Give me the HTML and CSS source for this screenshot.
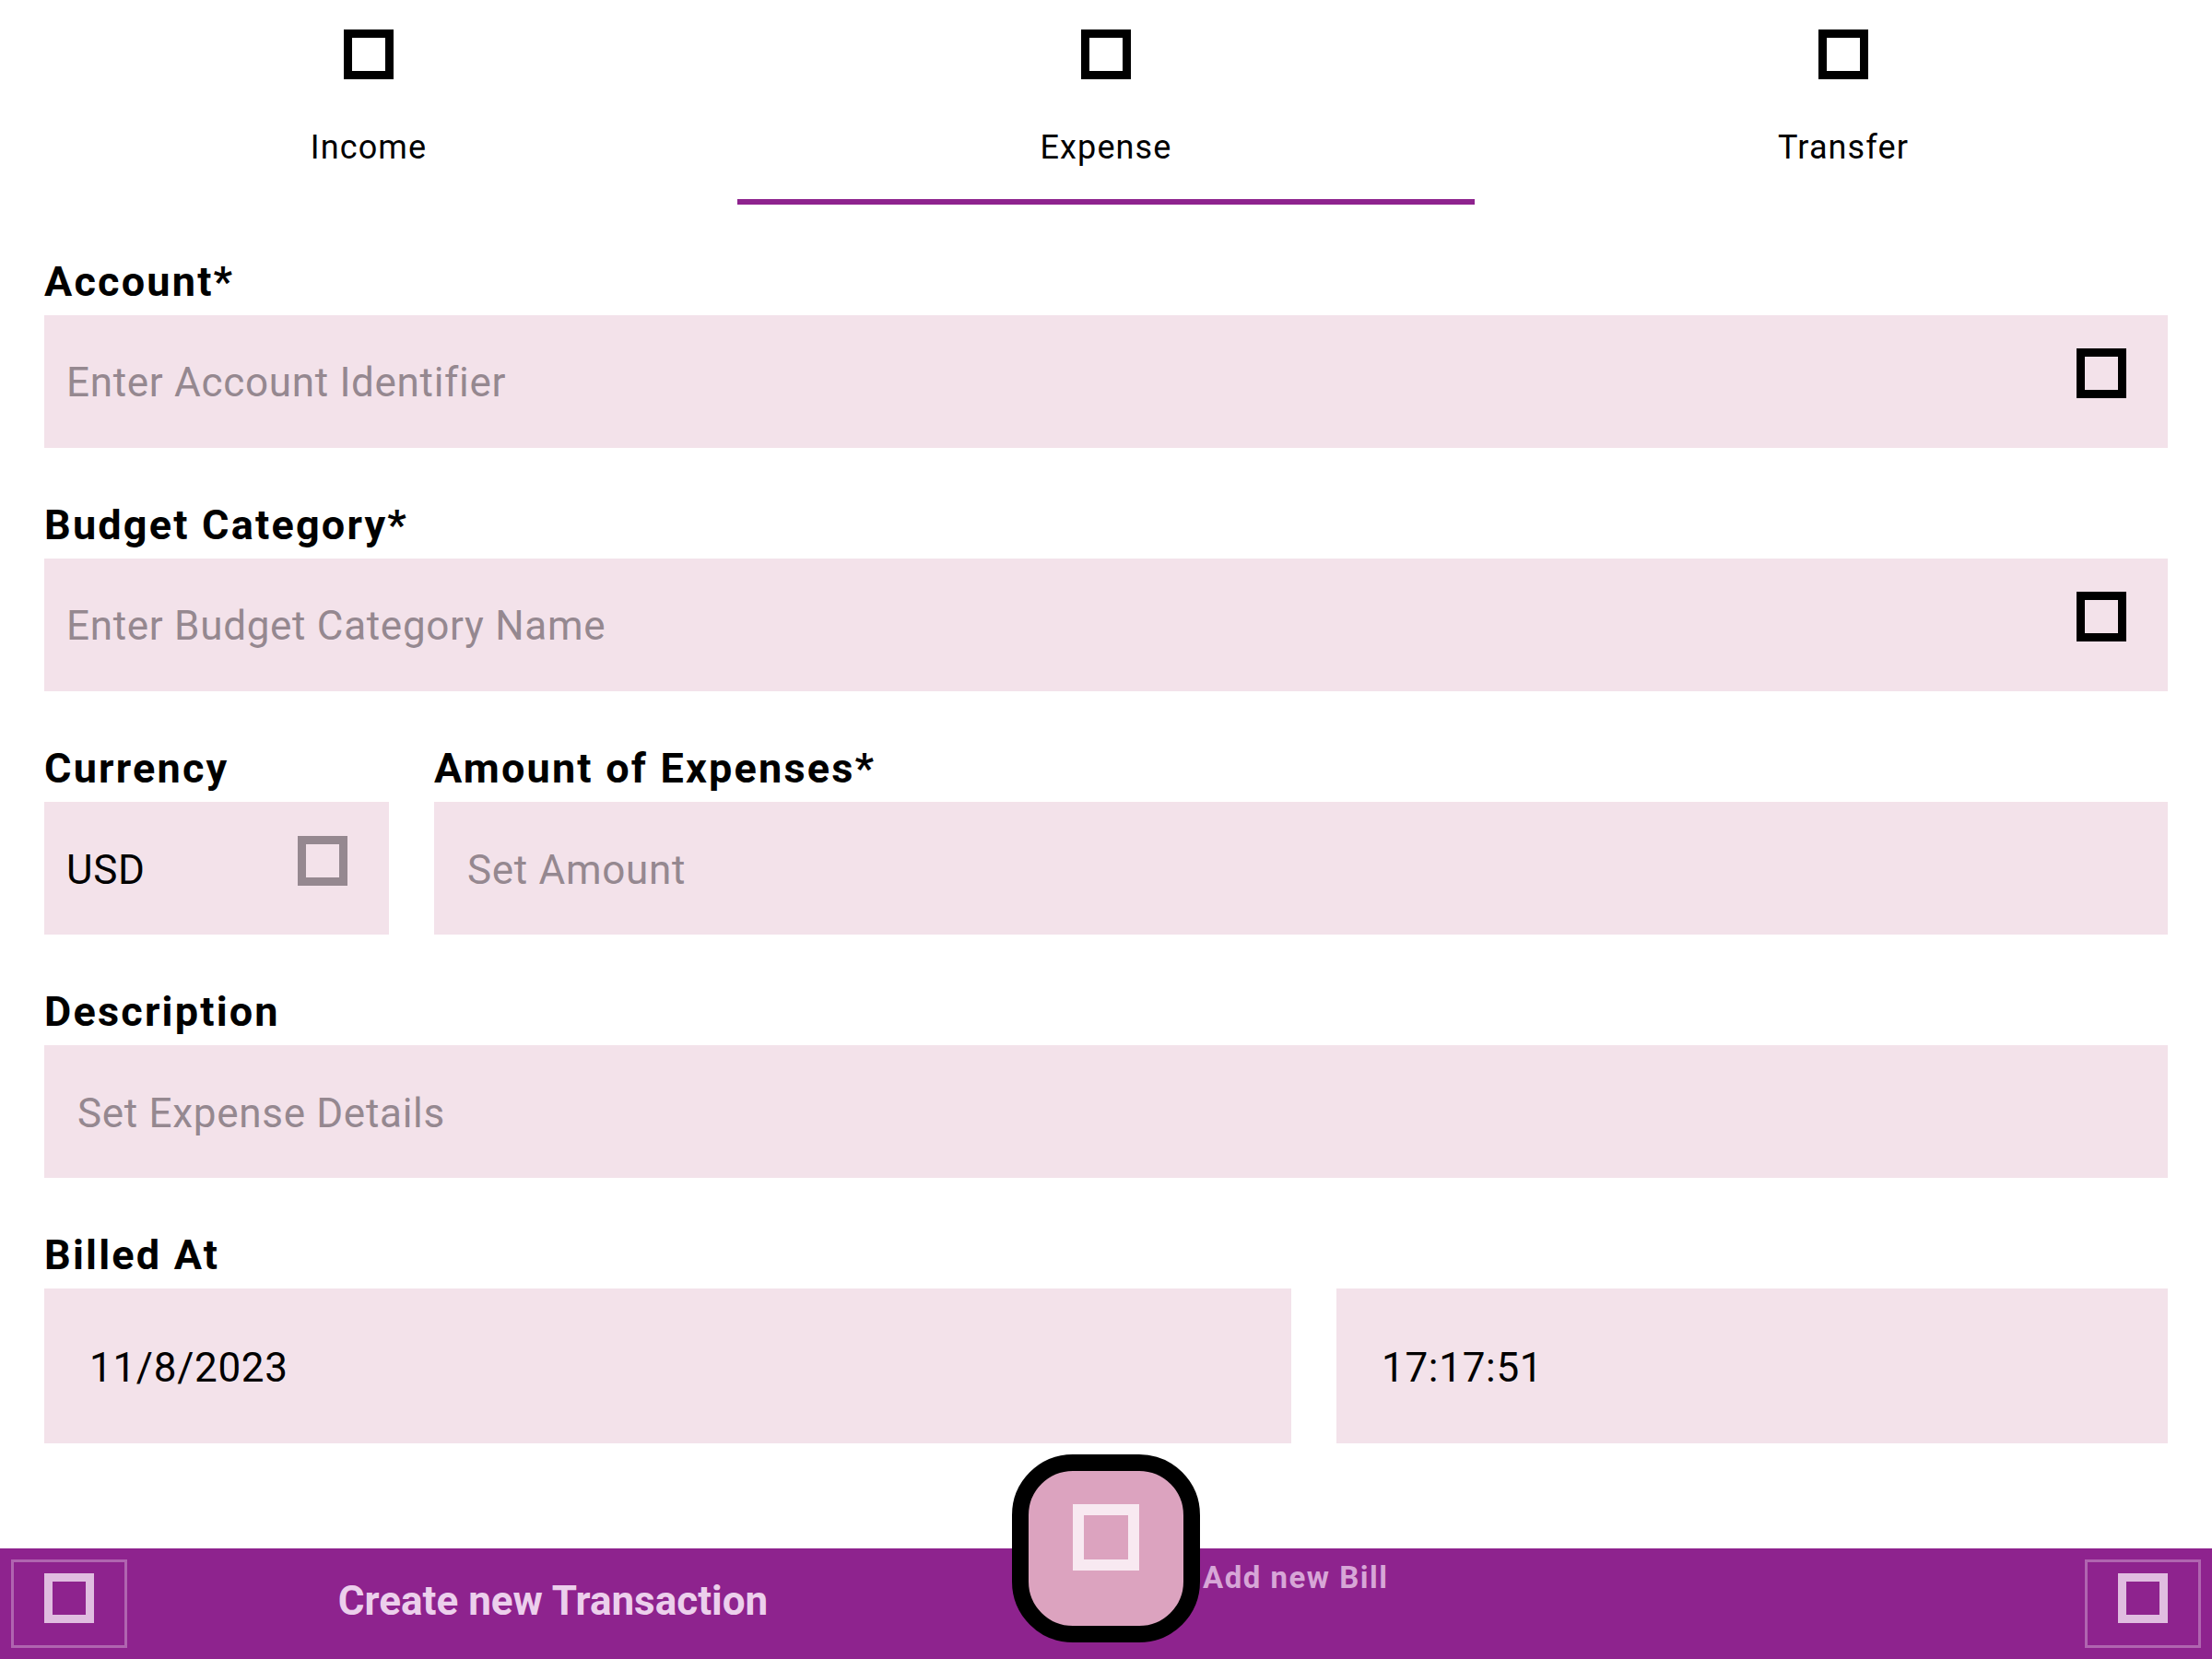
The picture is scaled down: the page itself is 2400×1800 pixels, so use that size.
FILE: index.html
```html
<!DOCTYPE html>
<html lang="en">
<head>
<meta charset="utf-8">
<title>Create new Transaction</title>
<link rel="stylesheet" href="styles.css">
</head>
<body>
<div class="app">
  <nav class="tabs">
    <div class="tab"><span class="tab-icon"></span><span class="tab-label">Income</span></div>
    <div class="tab active"><span class="tab-icon"></span><span class="tab-label">Expense</span></div>
    <div class="tab"><span class="tab-icon"></span><span class="tab-label">Transfer</span></div>
  </nav>

  <main class="form">
    <div class="field">
      <div class="label">Account*</div>
      <div class="box box-suffix">
        <span class="placeholder pad-a">Enter Account Identifier</span>
        <span class="box-icon"></span>
      </div>
    </div>

    <div class="field">
      <div class="label">Budget Category*</div>
      <div class="box box-suffix">
        <span class="placeholder pad-a">Enter Budget Category Name</span>
        <span class="box-icon"></span>
      </div>
    </div>

    <div class="row-currency">
      <div class="field">
        <div class="label">Currency</div>
        <div class="box box-suffix">
          <span class="value pad-a low">USD</span>
          <span class="box-icon grey"></span>
        </div>
      </div>
      <div class="field">
        <div class="label">Amount of Expenses*</div>
        <div class="box">
          <span class="placeholder pad-b low">Set Amount</span>
        </div>
      </div>
    </div>

    <div class="field">
      <div class="label">Description</div>
      <div class="box">
        <span class="placeholder pad-b low">Set Expense Details</span>
      </div>
    </div>

    <div class="field">
      <div class="label">Billed At</div>
      <div class="row-datetime">
        <div class="box box-tall"><span class="value pad-c low">11/8/2023</span></div>
        <div class="box box-tall"><span class="value pad-c low">17:17:51</span></div>
      </div>
    </div>
  </main>

  <footer class="bar">
    <div class="bar-left">
      <div class="nav-btn nav-btn-left"><span class="nav-icon"></span></div>
      <div class="bar-title">Create new Transaction</div>
      <div></div>
    </div>
    <div class="bar-right">
      <div class="bill-label">Add new Bill</div>
      <div class="nav-btn"><span class="nav-icon"></span></div>
    </div>
    <div class="fab"><span class="fab-icon"></span></div>
  </footer>
</div>
</body>
</html>
```

FILE: styles.css
```css
html, body {
  margin: 0;
  padding: 0;
  background: #ffffff;
}

body {
  font-family: Roboto, "Noto Sans", "Liberation Sans", sans-serif;
  color: #000;
}

.app {
  width: 2400px;
  height: 1800px;
  display: flex;
  flex-direction: column;
  overflow: hidden;
}

/* Tabs */
.tabs {
  display: grid;
  grid-template-columns: 1fr 1fr 1fr;
  height: 222px;
}

.tab {
  display: flex;
  flex-direction: column;
  align-items: center;
  box-sizing: border-box;
  height: 222px;
  padding-top: 32px;
  border-bottom: 6px solid transparent;
}

.tab.active {
  border-bottom-color: #8e238e;
}

.tab-icon {
  width: 54px;
  height: 54px;
  box-sizing: border-box;
  border: 9px solid #000;
}

.tab-label {
  margin-top: 56px;
  font-size: 36px;
  line-height: 37px;
  letter-spacing: 1.1px;
  color: #000;
}

/* Form */
.form {
  flex: 1;
  padding: 0 48px;
}

.field {
  display: flex;
  flex-direction: column;
}

.label {
  margin-top: 61px;
  margin-bottom: 14px;
  height: 45px;
  font-size: 45px;
  line-height: 45px;
  font-weight: 700;
  letter-spacing: 2.2px;
  white-space: nowrap;
}

.box {
  height: 144px;
  background: #f3e2ea;
  display: flex;
  align-items: center;
  justify-content: space-between;
  box-sizing: border-box;
  font-size: 44px;
  letter-spacing: 0.7px;
}

.box-suffix {
  padding-right: 45px;
}

.box-tall {
  height: 168px;
}

.placeholder {
  color: #958890;
}

.value {
  color: #000;
}

.pad-a { padding-left: 24px; padding-top: 2px; }
.pad-b { padding-left: 36px; }
.pad-c { padding-left: 49px; }
.low { padding-top: 4px; padding-bottom: 0; }

.box-icon {
  width: 54px;
  height: 54px;
  box-sizing: border-box;
  border: 9px solid #000;
  flex: none;
  margin-bottom: 18px;
}

.box-icon.grey {
  border-color: #958890;
  margin-bottom: 16px;
}

.row-currency {
  display: grid;
  grid-template-columns: 374px 1fr;
  column-gap: 49px;
}

.row-datetime {
  display: grid;
  grid-template-columns: 3fr 2fr;
  column-gap: 49px;
}

/* Bottom bar */
.bar {
  position: relative;
  height: 120px;
  flex: none;
  background: #8e238e;
  display: grid;
  grid-template-columns: 1fr 1fr;
}

.bar-left {
  display: grid;
  grid-template-columns: 138px 1fr 138px;
  align-items: center;
}

.nav-btn {
  width: 126px;
  height: 96px;
  box-sizing: border-box;
  border: 3px solid rgba(255, 255, 255, 0.3);
  display: flex;
  align-items: center;
  justify-content: center;
  padding-bottom: 12px;
  margin-right: 12px;
}

.nav-btn-left {
  margin-left: 12px;
  margin-right: 0;
}

.nav-icon {
  width: 54px;
  height: 54px;
  box-sizing: border-box;
  border: 9px solid #e0bde0;
}

.bar-title {
  text-align: center;
  font-size: 44px;
  line-height: 44px;
  font-weight: 700;
  letter-spacing: 0;
  color: #eccfec;
  white-space: nowrap;
  margin-bottom: 6px;
}

.bar-right {
  display: flex;
  align-items: center;
  justify-content: space-between;
  padding-left: 105px;
}

.bill-label {
  align-self: flex-start;
  margin-top: 15px;
  font-size: 33px;
  line-height: 33px;
  font-weight: 700;
  letter-spacing: 1.5px;
  color: #d7a6d7;
  white-space: nowrap;
}

.fab {
  position: absolute;
  left: 50%;
  top: -102px;
  margin-left: -102px;
  width: 204px;
  height: 204px;
  box-sizing: border-box;
  border: 18px solid #000;
  border-radius: 66px;
  background: #dca3bf;
  display: flex;
  align-items: center;
  justify-content: center;
  padding-bottom: 24px;
}

.fab-icon {
  width: 72px;
  height: 72px;
  box-sizing: border-box;
  border: 12px solid #f8e9f1;
}
```
